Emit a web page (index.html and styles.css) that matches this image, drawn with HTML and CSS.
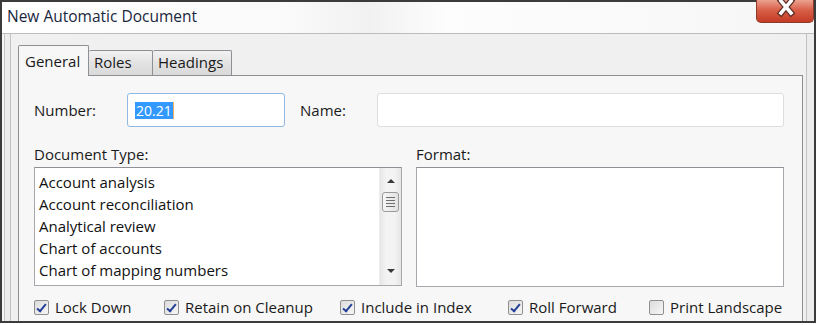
FILE: index.html
```html
<!DOCTYPE html>
<html lang="en">
	<head>
		<meta charset="UTF-8">
		<title>New Automatic Document</title>
		<link rel="stylesheet" href="styles.css">
	</head>
	<body>
		<div class="window">
			<!-- Title bar -->
			<div class="titlebar">
				<span class="title">New Automatic Document</span>
				<div class="close">
					<svg width="26" height="20" viewBox="0 0 26 20">
						<path d="M8 1 L18 13 M18 1 L8 13" stroke="#5a2a22" stroke-width="6" stroke-linecap="square"/>
						<path d="M8 1 L18 13 M18 1 L8 13" stroke="#ffffff" stroke-width="3.6" stroke-linecap="square"/>
					</svg>
				</div>
			</div>

			<div class="frame">
				<div class="client">
					<!-- Tabs -->
					<div class="tabs">
						<div class="tab active">General</div>
						<div class="tab">Roles</div>
						<div class="tab">Headings</div>
					</div>

					<div class="panel">
						<div class="fields">
							<span class="label number-label">Number:</span>
							<div class="input number-input">
								<span class="selected">20.21</span><span class="caret"></span>
							</div>
							<span class="label name-label">Name:</span>
							<div class="input name-input"></div>
						</div>

						<div class="lists">
							<div class="group">
								<div class="label group-label">Document Type:</div>
								<div class="listbox doc-types">
									<ul class="items">
										<li>Account analysis</li>
										<li>Account reconciliation</li>
										<li>Analytical review</li>
										<li>Chart of accounts</li>
										<li>Chart of mapping numbers</li>
									</ul>
									<div class="scrollbar">
										<span class="arrow up"></span>
										<span class="thumb"><i></i><i></i><i></i><i></i></span>
										<span class="arrow down"></span>
									</div>
								</div>
							</div>
							<div class="group">
								<div class="label group-label">Format:</div>
								<div class="listbox formats"></div>
							</div>
						</div>

						<div class="checks">
							<label class="check"><span class="box checked"></span>Lock Down</label>
							<label class="check"><span class="box checked"></span>Retain on Cleanup</label>
							<label class="check"><span class="box checked"></span>Include in Index</label>
							<label class="check"><span class="box checked"></span>Roll Forward</label>
							<label class="check"><span class="box"></span>Print Landscape</label>
						</div>
					</div>
				</div>
			</div>
		</div>
	</body>
</html>
```

FILE: styles.css
```css
body {
	margin: 0;
	width: 819px;
	height: 325px;
	overflow: hidden;
	background: #ffffff;
	font-family: 'Open Sans', 'Noto Sans', sans-serif;
	color: #1a1a1a;
}

.window {
	width: 816px;
	height: 323px;
	box-sizing: border-box;
	border: 2px solid #3b3b3b;
	display: flex;
	flex-direction: column;
}

/* Title bar */
.titlebar {
	height: 31px;
	flex: none;
	display: flex;
	align-items: center;
	justify-content: space-between;
	padding-left: 5px;
	border-bottom: 1px solid #bcbcbc;
	background: linear-gradient(to right, #ffffff 0%, #fafafa 35%, #f1f1f1 45%, #fdfdfd 55%, #f6f6f6 100%);
}

.title {
	font-size: 15.5px;
	color: #1a2740;
	margin-top: -4px;
}

.close {
	align-self: flex-start;
	width: 58px;
	height: 23px;
	margin-top: -2px;
	box-sizing: border-box;
	border: 1px solid #8f3b2c;
	border-top: none;
	border-radius: 0 0 5px 5px;
	background: linear-gradient(#eba290, #d96049 45%, #c43b25 100%);
	display: flex;
	justify-content: center;
	padding-left: 2px;
}

/* Window frame around the client area */
.frame {
	flex: 1;
	display: flex;
	padding: 0 7px 0 8px;
	background: #ececec;
	box-shadow: inset 2px 0 0 #f6f6f6, inset 3px 0 0 #c6c6c6;
	overflow: hidden;
}

.client {
	flex: 1;
	background: #f0f0f0;
	border-left: 1px solid #c2c2c2;
	border-right: 1px solid #c2c2c2;
	padding: 11px 3px 0 7px;
	display: flex;
	flex-direction: column;
}

/* Tabs */
.tabs {
	display: flex;
	align-items: flex-end;
	height: 30px;
	position: relative;
	z-index: 1;
}

.tab {
	height: 25px;
	box-sizing: border-box;
	padding: 0 5px;
	font-size: 15px;
	line-height: 23px;
	border: 1px solid #8d8f94;
	border-bottom: none;
	border-left: none;
	background: linear-gradient(#f2f2f2, #e3e3e3 50%, #d9d9d9);
	border-radius: 2px 2px 0 0;
}

.tab:nth-child(2) {
	width: 64px;
}

.tab:nth-child(3) {
	width: 79px;
}

.tab.active {
	width: 71px;
	height: 31px;
	margin-bottom: -1px;
	border-left: 1px solid #8d8f94;
	background: #f7f7f7;
	line-height: 30px;
	padding-left: 6px;
}

.panel {
	flex: 1;
	border: 1px solid #8d8f94;
	border-bottom: none;
	background: #f7f7f7;
	padding: 17px 18px 0 15px;
}

.label {
	font-size: 15px;
	color: #1a1a1a;
}

/* Number / Name row */
.fields {
	display: flex;
	align-items: center;
	height: 34px;
}

.number-label {
	width: 93px;
}

.input {
	height: 34px;
	box-sizing: border-box;
	border-radius: 3px;
	background: #ffffff;
}

.number-input {
	width: 158px;
	border: 1px solid #8fb9e3;
	display: flex;
	align-items: center;
	padding-left: 7px;
	margin-right: 15px;
}

.selected {
	background: #3399ff;
	color: #ffffff;
	font-size: 14px;
	line-height: 17px;
	padding: 0 1px;
}

.caret {
	width: 1px;
	height: 17px;
	background: #f0b060;
}

.name-label {
	width: 77px;
}

.name-input {
	flex: 1;
	border: 1px solid #dedede;
}

/* Lists */
.lists {
	display: flex;
	gap: 14px;
	margin-top: 16px;
}

.group {
	display: flex;
	flex-direction: column;
}

.group-label {
	height: 22px;
	margin-top: 1px;
	margin-bottom: 1px;
	line-height: 20px;
}

.listbox {
	box-sizing: border-box;
	border: 1px solid #a6a8ad;
	border-top-color: #8e9096;
	background: #ffffff;
	display: flex;
}

.doc-types {
	width: 368px;
	height: 119px;
}

.formats {
	width: 368px;
	height: 120px;
}

.items {
	list-style: none;
	margin: 0;
	padding: 3px 0 0 4px;
	flex: 1;
	font-size: 15px;
	line-height: 22px;
	color: #111111;
}

.scrollbar {
	width: 21px;
	background: linear-gradient(to right, #e6e6e6, #f3f3f3 30%, #f3f3f3 70%, #e6e6e6);
	border-left: 1px solid #ececec;
	display: flex;
	flex-direction: column;
	align-items: center;
}

.arrow {
	width: 0;
	height: 0;
	border-left: 4px solid transparent;
	border-right: 4px solid transparent;
}

.arrow.up {
	margin-top: 11px;
	border-bottom: 4px solid #3a3a3a;
}

.arrow.down {
	margin-top: auto;
	margin-bottom: 12px;
	border-top: 4px solid #3a3a3a;
}

.thumb {
	margin-top: 9px;
	width: 17px;
	height: 20px;
	box-sizing: border-box;
	border: 1px solid #9a9a9a;
	border-radius: 3px;
	background: linear-gradient(to right, #f6f6f6, #e2e2e2);
	display: flex;
	flex-direction: column;
	justify-content: center;
	align-items: center;
	gap: 2px;
}

.thumb i {
	display: block;
	width: 9px;
	height: 1px;
	background: #6e6e6e;
}

/* Check boxes */
.checks {
	display: grid;
	grid-template-columns: 130px 176px 168px 141px auto;
	margin-top: 9px;
	font-size: 15px;
}

.check {
	display: flex;
	align-items: center;
	gap: 6px;
	height: 22px;
}

.box {
	width: 15px;
	height: 15px;
	box-sizing: border-box;
	border: 1px solid #8e8f8f;
	border-radius: 2px;
	background: linear-gradient(135deg, #dcdcdc, #f6f6f6);
	position: relative;
}

.box.checked::after {
	content: '';
	position: absolute;
	left: 4px;
	top: 1px;
	width: 3px;
	height: 8px;
	border: solid #233e99;
	border-width: 0 2px 2px 0;
	transform: rotate(40deg);
}
```
